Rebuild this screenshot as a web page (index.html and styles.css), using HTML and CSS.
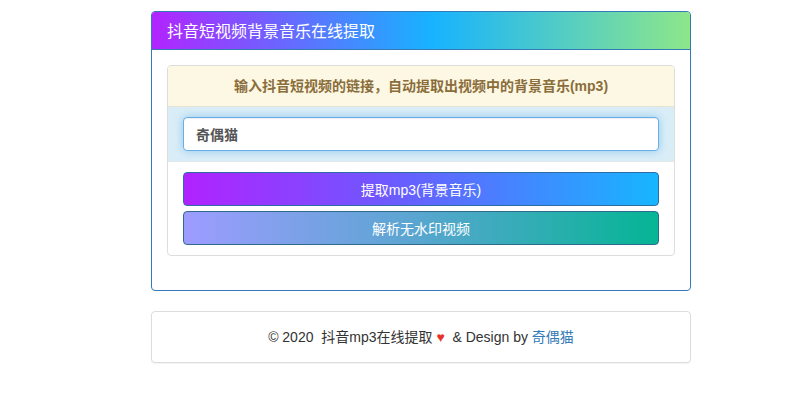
FILE: index.html
```html
<!DOCTYPE html>
<html lang="zh-CN">
<head>
<meta charset="utf-8">
<title>抖音短视频背景音乐在线提取</title>
<link rel="stylesheet" href="styles.css">
</head>
<body>
<div class="wrap">
  <div class="panel panel-main">
    <div class="panel-heading">抖音短视频背景音乐在线提取</div>
    <div class="panel-body">
      <div class="inner">
        <div class="inner-heading">输入抖音短视频的链接，自动提取出视频中的背景音乐(mp3)</div>
        <div class="inner-input">
          <input class="form-control" type="text" value="奇偶猫">
        </div>
        <div class="inner-actions">
          <button class="btn btn-mp3" type="button">提取mp3(背景音乐)</button>
          <button class="btn btn-video" type="button">解析无水印视频</button>
        </div>
      </div>
    </div>
  </div>
  <div class="panel panel-footer">
    © 2020&nbsp; 抖音mp3在线提取 <span class="heart">♥</span>&nbsp; &amp; Design by <a class="link" href="#">奇偶猫</a>
  </div>
</div>
</body>
</html>
```

FILE: styles.css
```css
* { box-sizing: border-box; }
html, body { margin: 0; padding: 0; background: #fff; }
body {
  font-family: "Liberation Sans", Arial, "Noto Sans CJK SC", sans-serif;
  font-size: 14px;
  line-height: 20px;
  color: #333;
}
.wrap {
  width: 691px;
  padding: 11px 0 0 151px;
}
.panel {
  width: 540px;
  border-radius: 4px;
  background: #fff;
  margin-bottom: 20px;
}
.panel-main { border: 1px solid #337ab7; }
.panel-heading {
  height: 38px;
  line-height: 37px;
  padding: 0 15px;
  color: #fff;
  font-size: 16px;
  border-bottom: 1px solid #337ab7;
  border-radius: 3px 3px 0 0;
  background: linear-gradient(to right, #b224ff 0%, #17b3ff 52%, #8de68a 100%);
  font-family: "Noto Sans CJK SC", sans-serif;
}
.panel-body { padding: 15px 15px 14px; }
.inner {
  border: 1px solid #ddd;
  border-radius: 4px;
  margin-bottom: 20px;
  overflow: hidden;
}
.inner-heading {
  background: #fcf8e3;
  color: #8a6d3b;
  font-weight: bold;
  text-align: center;
  padding: 10px 15px;
  border-bottom: 1px solid #e8e2d0;
}
.inner-input {
  background: #d9edf7;
  padding: 10px 15px;
  border-bottom: 1px solid #e3e8ea;
}
.form-control {
  display: block;
  width: 100%;
  height: 34px;
  padding: 6px 12px;
  font: bold 14px "Liberation Sans", Arial, "Noto Sans CJK SC", sans-serif;
  color: #555;
  background: #fff;
  border: 1px solid #66afe9;
  border-radius: 4px;
  outline: 0;
  box-shadow: inset 0 1px 1px rgba(0,0,0,.075), 0 0 8px rgba(102,175,233,.6);
}
.inner-actions {
  display: flex;
  flex-direction: column;
  gap: 5px;
  padding: 10px 15px;
}
.btn {
  display: block;
  width: 100%;
  height: 34px;
  border-radius: 4px;
  color: #fff;
  font: 14px "Liberation Sans", Arial, "Noto Sans CJK SC", sans-serif;
  text-align: center;
  cursor: pointer;
  padding: 0;
}
.btn-mp3 {
  border: 1px solid #2e6da4;
  background: linear-gradient(to right, #b122ff 0%, #6a5cff 45%, #17b6ff 100%);
}
.btn-video {
  border: 1px solid #2e6a8a;
  background: linear-gradient(to right, #9d9cff 0%, #58a6cf 50%, #05b595 100%);
}
.panel-footer {
  border: 1px solid #ddd;
  padding: 15px;
  text-align: center;
  box-shadow: 0 1px 1px rgba(0,0,0,.05);
}
.heart { color: #e8332d; }
.link { color: #337ab7; text-decoration: none; }
```
